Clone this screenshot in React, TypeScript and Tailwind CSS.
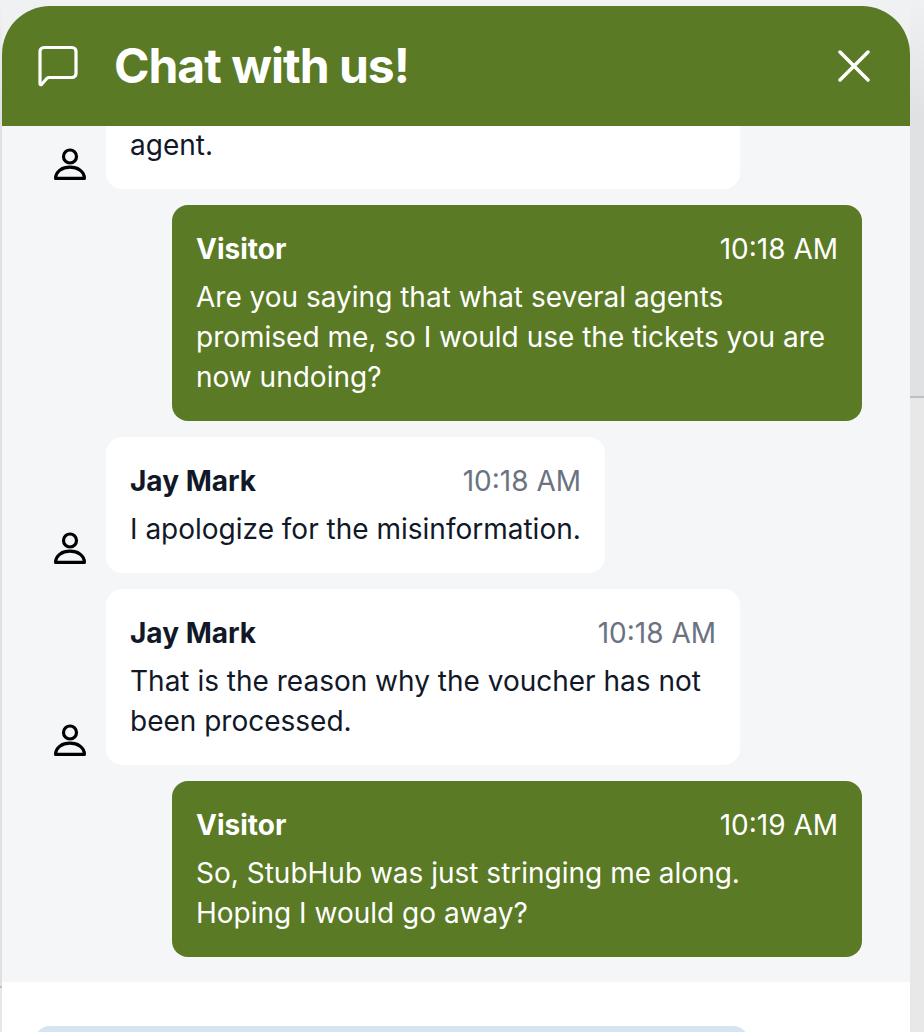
import React from "react";

const font = { fontFamily: "Inter, sans-serif" };

const PersonIcon: React.FC = () => (
  <svg viewBox="0 0 32 32" fill="none" stroke="black" strokeWidth="3.2" className="mb-[9px] h-8 w-8 shrink-0">
    <circle cx="16" cy="8.5" r="6.5" />
    <path strokeLinejoin="round" d="M1.6 30.4C1.6 23.5 8 19.2 16 19.2S30.4 23.5 30.4 30.4Z" />
  </svg>
);

const AgentMessage: React.FC<{ time: string; width: string; children: React.ReactNode }> = ({ time, width, children }) => (
  <div className="flex items-end gap-5">
    <PersonIcon />
    <div className={`${width} rounded-2xl bg-white p-6 text-[#111827]`}>
      <div className="flex items-center justify-between">
        <span className="text-[28px] leading-10 font-bold">Jay Mark</span>
        <span className="text-[28px] leading-10 text-[#6b7280]">{time}</span>
      </div>
      <p className="mt-2 text-[28px] leading-10">{children}</p>
    </div>
  </div>
);

const VisitorMessage: React.FC<{ time: string; children: React.ReactNode }> = ({ time, children }) => (
  <div className="flex justify-end">
    <div className="w-[690px] rounded-2xl bg-[#5a7a25] p-6 text-white">
      <div className="flex items-center justify-between">
        <span className="text-[28px] leading-10 font-bold">Visitor</span>
        <span className="text-[28px] leading-10">{time}</span>
      </div>
      <p className="mt-2 text-[28px] leading-10">{children}</p>
    </div>
  </div>
);

export default function App() {
  return (
    <div className="relative h-[1032px] w-[924px] overflow-hidden bg-[#f0f1f3] pt-[6px] pl-[2px]" style={font}>
      {/* page behind the widget, seen at the edges */}
      <div className="absolute top-0 right-0 h-[396px] w-[14px] bg-gradient-to-b from-[#f0f1f3] to-[#e0e1e3] to-[30%]" />
      <div className="absolute top-[396px] right-0 h-[2px] w-[14px] bg-[#bcc0c3]" />
      <div className="absolute top-[398px] right-0 bottom-0 w-[14px] bg-[#e8e8e8]" />
      <div className="absolute top-0 left-0 h-[987px] w-[2px] bg-gradient-to-b from-[#f0f1f3] to-[#e0e1e3] to-[12%]" />
      <div className="absolute top-[986px] left-0 h-[2px] w-[2px] bg-[#bcc0c3]" />
      <div className="absolute top-[988px] bottom-0 left-0 w-[2px] bg-[#e8e8e8]" />

      <div className="relative h-[1100px] w-[908px] overflow-hidden rounded-t-[48px] bg-white">
        {/* Header */}
        <div className="flex h-[120px] items-center bg-[#5a7a25] pr-10 pl-9 text-white">
          <svg viewBox="0 0 40 42" fill="none" stroke="white" strokeWidth="3.2" strokeLinejoin="round" strokeLinecap="round" className="h-[42px] w-10">
            <path d="M2 36.5V6.5a4 4 0 0 1 4-4h28a4 4 0 0 1 4 4v22a4 4 0 0 1-4 4H11a3 3 0 0 0-2 .8L3.5 39.5A.9.9 0 0 1 2 38.8Z" />
          </svg>
          <h1 className="ml-9 text-[48px] leading-[60px] font-bold tracking-[-0.021em]">Chat with us!</h1>
          <svg viewBox="0 0 32 32" fill="none" stroke="white" strokeWidth="3.5" strokeLinecap="round" className="mt-[-1px] ml-auto h-8 w-8">
            <path d="M2 2L30 30M30 2L2 30" />
          </svg>
        </div>

        {/* Messages */}
        <div className="flex h-[856px] flex-col justify-end gap-4 overflow-hidden bg-[#f4f6f8] pr-12 pb-[25px] pl-[52px]">
          <div className="flex shrink-0 items-end gap-5">
            <PersonIcon />
            <div className="w-[634px] rounded-b-2xl bg-white px-6 pb-6 text-[28px] leading-10 text-[#111827]">agent.</div>
          </div>
          <VisitorMessage time="10:18 AM">
            Are you saying that what several agents promised me, so I would use the tickets you are now undoing?
          </VisitorMessage>
          <AgentMessage time="10:18 AM" width="w-[499px]">I apologize for the misinformation.</AgentMessage>
          <AgentMessage time="10:18 AM" width="w-[634px]">That is the reason why the voucher has not been processed.</AgentMessage>
          <VisitorMessage time="10:19 AM">
            So, StubHub was just stringing me along. Hoping I would go away?
          </VisitorMessage>
        </div>

        {/* Input */}
        <div className="px-8 pt-11">
          <div className="h-20 w-[715px] rounded-2xl bg-[#d6e3f3]" />
        </div>
      </div>
    </div>
  );
}
